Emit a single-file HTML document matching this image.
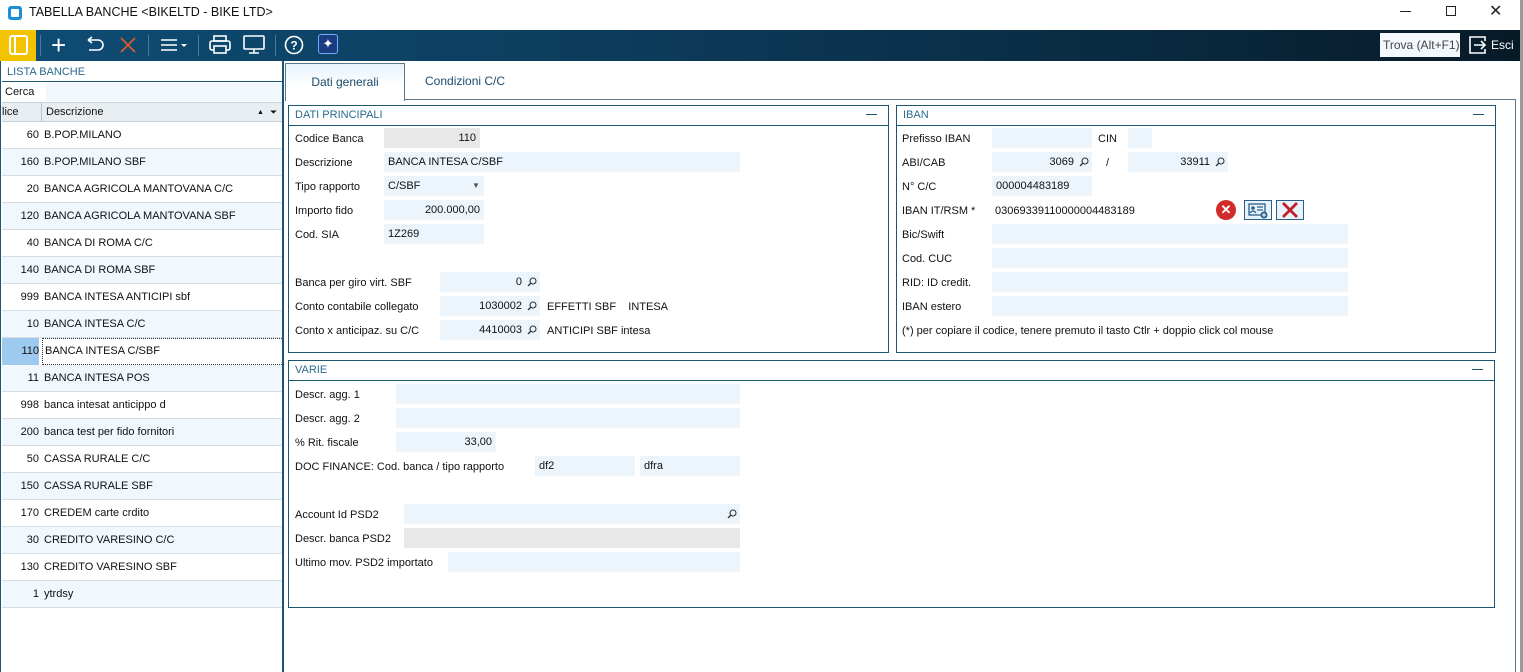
<!DOCTYPE html>
<html><head><meta charset="utf-8"><style>
*{margin:0;padding:0;box-sizing:border-box}
body{width:1523px;height:672px;overflow:hidden;background:#fff;font-family:"Liberation Sans",sans-serif;font-size:11px;color:#111;position:relative}
.a{position:absolute;white-space:nowrap}
.f{position:absolute;background:#edf5fc;height:20px;line-height:20px;padding:0 4px;white-space:nowrap}
.g{background:#e8e8e8}
.r{text-align:right}
.box{position:absolute;border:1px solid #1d5670}
.bh{height:20px;border-bottom:1px solid #1d5670;color:#2a6a8c;padding-left:6px;line-height:19px;position:relative}
.bh:after{content:"";position:absolute;right:11px;top:8px;width:11px;height:1px;background:#1d5670}
.row{position:absolute;left:2px;width:280px;height:27px;border-bottom:1px solid #d6dde4;line-height:26px}
.row .c{position:absolute;left:0;width:37px;text-align:right}
.row .d{position:absolute;left:42px}
.odd{background:#f0f7fd}
.mag{position:absolute;width:10px;height:10px}
</style></head><body>
<div class="a" style="left:8px;top:6px;width:14px;height:14px;background:#1c8fd6;border-radius:3px"><div style="position:absolute;left:3px;top:3px;width:8px;height:8px;background:#fff;border-radius:1px"></div></div>
<div class="a" style="left:29px;top:5px;font-size:12.5px">TABELLA BANCHE &lt;BIKELTD - BIKE LTD&gt;</div>
<div class="a" style="left:1400px;top:11px;width:11px;height:1px;background:#222"></div>
<div class="a" style="left:1446px;top:6px;width:10px;height:10px;border:1px solid #222"></div>
<div class="a" style="left:1489px;top:1px;font-size:16px;color:#222">✕</div>
<div class="a" style="left:1520px;top:0;width:3px;height:672px;background:#9a9a9a"></div>
<div class="a" style="left:0;top:30px;width:1520px;height:31px;background:linear-gradient(90deg,#0e4d75 0%,#0c3c5c 40%,#0a2a40 75%,#071a28 100%)"></div>
<div class="a" style="left:0;top:30px;width:36px;height:31px;background:#f3c200"></div>
<div class="a" style="left:9px;top:35px;width:19px;height:20px;border:2px solid #fff;border-radius:3px;background:#f3c200"><div style="position:absolute;left:3px;top:0;width:2px;height:16px;background:#fff"></div></div>
<div class="a" style="left:40px;top:35px;width:1px;height:21px;background:#4a7a9a"></div>
<div class="a" style="left:51px;top:30px;font-size:26px;color:#fff;line-height:30px;font-weight:300">+</div>
<svg class="a" style="left:84px;top:36px" width="22" height="18"><path d="M4 4h10a5 5 0 0 1 0 10H5M4 4l4-3M4 4l4 3" stroke="#fff" stroke-width="1.6" fill="none"/></svg>
<svg class="a" style="left:119px;top:36px" width="18" height="18"><path d="M2 2L16 16M16 2L2 16" stroke="#d65a2a" stroke-width="1.8"/></svg>
<div class="a" style="left:148px;top:35px;width:1px;height:21px;background:#4a7a9a"></div>
<svg class="a" style="left:160px;top:37px" width="28" height="16"><path d="M1 3h16M1 8h16M1 13h16" stroke="#fff" stroke-width="1.6"/><path d="M21 7l3 3 3-3z" fill="#fff"/></svg>
<div class="a" style="left:198px;top:35px;width:1px;height:21px;background:#4a7a9a"></div>
<svg class="a" style="left:209px;top:35px" width="22" height="20"><rect x="5" y="1" width="12" height="5" fill="none" stroke="#fff" stroke-width="1.6"/><rect x="1" y="6" width="20" height="9" rx="2" fill="none" stroke="#fff" stroke-width="1.6"/><rect x="5" y="11" width="12" height="7" fill="#0d4668" stroke="#fff" stroke-width="1.6"/></svg>
<svg class="a" style="left:243px;top:35px" width="22" height="20"><rect x="1" y="1" width="20" height="13" rx="1" fill="none" stroke="#fff" stroke-width="1.6"/><path d="M11 14v4M6 18h10" stroke="#fff" stroke-width="1.6"/></svg>
<div class="a" style="left:275px;top:35px;width:1px;height:21px;background:#4a7a9a"></div>
<svg class="a" style="left:284px;top:35px" width="22" height="22"><circle cx="10" cy="10" r="8.5" fill="none" stroke="#fff" stroke-width="1.6"/><text x="10" y="14.5" text-anchor="middle" fill="#fff" font-size="12" font-family="Liberation Sans" font-weight="bold">?</text></svg>
<div class="a" style="left:318px;top:34px;width:20px;height:20px;background:#1a3c80;border:1px solid #6ab0ff;border-radius:3px;color:#fff;font-size:13px;line-height:18px;text-align:center">✦</div>
<div class="a" style="left:1380px;top:33px;width:80px;height:24px;background:#f2f8fd;color:#444;font-size:12px;line-height:24px;padding-left:3px">Trova (Alt+F1)</div>
<svg class="a" style="left:1468px;top:35px" width="20" height="20"><path d="M8 2H2v16h6" stroke="#fff" stroke-width="1.6" fill="none"/><path d="M6 10h11M13 6l4 4-4 4" stroke="#fff" stroke-width="1.6" fill="none"/><path d="M8 2h9v4M17 14v4H8" stroke="#fff" stroke-width="1.6" fill="none"/></svg>
<div class="a" style="left:1491px;top:38px;color:#fff;font-size:12px">Esci</div>
<div class="a" style="left:0;top:61px;width:1px;height:611px;background:#1d5670"></div>
<div class="a" style="left:282px;top:61px;width:2px;height:611px;background:#1d5670"></div>
<div class="a" style="left:2px;top:63px;width:280px;height:19px;border-bottom:1px solid #1d5670;color:#2a6a8c;padding-left:5px;line-height:18px">LISTA BANCHE</div>
<div class="a" style="left:2px;top:83px;width:44px;height:18px;line-height:18px;padding-left:3px">Cerca</div>
<div class="a" style="left:46px;top:83px;width:236px;height:18px;background:#f0f7fd"></div>
<div class="a" style="left:2px;top:102px;width:280px;height:20px;background:#e9eef2;border-top:1px solid #c8d0d8;border-bottom:1px solid #c8d0d8;line-height:19px"><span class="a" style="left:0">lice</span><span class="a" style="left:39px;top:0;width:1px;height:19px;background:#b8c2cc"></span><span class="a" style="left:44px">Descrizione</span><span class="a" style="left:255px;font-size:7px">▲</span><span class="a" style="left:268px;font-size:9px">⏷</span></div>
<div class="row" style="top:122px"><span class="c">60</span><span class="d">B.POP.MILANO</span></div>
<div class="row odd" style="top:149px"><span class="c">160</span><span class="d">B.POP.MILANO SBF</span></div>
<div class="row" style="top:176px"><span class="c">20</span><span class="d">BANCA AGRICOLA MANTOVANA C/C</span></div>
<div class="row odd" style="top:203px"><span class="c">120</span><span class="d">BANCA AGRICOLA MANTOVANA SBF</span></div>
<div class="row" style="top:230px"><span class="c">40</span><span class="d">BANCA DI ROMA C/C</span></div>
<div class="row odd" style="top:257px"><span class="c">140</span><span class="d">BANCA DI ROMA SBF</span></div>
<div class="row" style="top:284px"><span class="c">999</span><span class="d">BANCA INTESA ANTICIPI sbf</span></div>
<div class="row odd" style="top:311px"><span class="c">10</span><span class="d">BANCA INTESA C/C</span></div>
<div class="row" style="top:338px;border:none"><span class="c" style="background:#9fcaf0;height:27px">110</span><span class="d" style="left:40px;width:240px;height:27px;border-top:1px dotted #333;border-bottom:1px dotted #333;border-left:1px dotted #333;padding-left:2px;line-height:25px">BANCA INTESA C/SBF</span></div>
<div class="row odd" style="top:365px"><span class="c">11</span><span class="d">BANCA INTESA POS</span></div>
<div class="row" style="top:392px"><span class="c">998</span><span class="d">banca intesat anticippo d</span></div>
<div class="row odd" style="top:419px"><span class="c">200</span><span class="d">banca test per fido fornitori</span></div>
<div class="row" style="top:446px"><span class="c">50</span><span class="d">CASSA RURALE C/C</span></div>
<div class="row odd" style="top:473px"><span class="c">150</span><span class="d">CASSA RURALE SBF</span></div>
<div class="row" style="top:500px"><span class="c">170</span><span class="d">CREDEM carte crdito</span></div>
<div class="row odd" style="top:527px"><span class="c">30</span><span class="d">CREDITO VARESINO C/C</span></div>
<div class="row" style="top:554px"><span class="c">130</span><span class="d">CREDITO VARESINO SBF</span></div>
<div class="row odd" style="top:581px"><span class="c">1</span><span class="d">ytrdsy</span></div>
<div class="a" style="left:404px;top:99px;width:1112px;height:1px;background:#5a7a90"></div>
<div class="a" style="left:1515px;top:99px;width:1px;height:573px;background:#5a7a90"></div>
<div class="a" style="left:285px;top:63px;width:120px;height:38px;border:1px solid #5a7a90;border-bottom:none;background:linear-gradient(#e6f3fc,#fff 60%);text-align:center;line-height:36px;font-size:12px;color:#1d4a6a">Dati generali</div>
<div class="a" style="left:425px;top:74px;font-size:12px;color:#1d4a6a">Condizioni C/C</div>
<div class="box" style="left:288px;top:105px;width:601px;height:248px"><div class="bh">DATI PRINCIPALI</div></div>
<div class="a" style="left:295px;top:133px">Codice Banca</div><div class="f g r" style="left:384px;top:128px;width:96px">110</div>
<div class="a" style="left:295px;top:157px">Descrizione</div><div class="f" style="left:384px;top:152px;width:356px">BANCA INTESA C/SBF</div>
<div class="a" style="left:295px;top:181px">Tipo rapporto</div><div class="f" style="left:384px;top:176px;width:100px">C/SBF<span class="a" style="left:88px;top:0;font-size:8px;color:#555">▼</span></div>
<div class="a" style="left:295px;top:205px">Importo fido</div><div class="f r" style="left:384px;top:200px;width:100px">200.000,00</div>
<div class="a" style="left:295px;top:229px">Cod. SIA</div><div class="f" style="left:384px;top:224px;width:100px">1Z269</div>
<div class="a" style="left:295px;top:277px">Banca per giro virt. SBF</div><div class="f r" style="left:440px;top:272px;width:100px;padding-right:18px">0</div>
<div class="a" style="left:295px;top:301px">Conto contabile collegato</div><div class="f r" style="left:440px;top:296px;width:100px;padding-right:18px">1030002</div><div class="a" style="left:547px;top:301px">EFFETTI SBF &nbsp;&nbsp;&nbsp;INTESA</div>
<div class="a" style="left:295px;top:325px">Conto x anticipaz. su C/C</div><div class="f r" style="left:440px;top:320px;width:100px;padding-right:18px">4410003</div><div class="a" style="left:547px;top:325px">ANTICIPI SBF intesa</div>
<div class="box" style="left:896px;top:105px;width:600px;height:248px"><div class="bh">IBAN</div></div>
<div class="a" style="left:902px;top:133px">Prefisso IBAN</div><div class="f" style="left:992px;top:128px;width:100px"></div><div class="a" style="left:1098px;top:133px">CIN</div><div class="f" style="left:1128px;top:128px;width:24px"></div>
<div class="a" style="left:902px;top:157px">ABI/CAB</div><div class="f r" style="left:992px;top:152px;width:100px;padding-right:18px">3069</div><div class="a" style="left:1106px;top:157px">/</div><div class="f r" style="left:1128px;top:152px;width:100px;padding-right:18px">33911</div>
<div class="a" style="left:902px;top:181px">N° C/C</div><div class="f" style="left:992px;top:176px;width:100px">000004483189</div>
<div class="a" style="left:902px;top:205px">IBAN IT/RSM *</div><div class="a" style="left:995px;top:205px">03069339110000004483189</div>
<div class="a" style="left:1216px;top:200px;width:20px;height:20px;border-radius:50%;background:#d12c2c;color:#fff;text-align:center;line-height:20px;font-size:13px;font-weight:bold">✕</div>
<svg class="a" style="left:1244px;top:200px" width="28" height="20"><rect x="0.5" y="0.5" width="27" height="19" fill="#e8f2fa" stroke="#2a5f88"/><rect x="5" y="4" width="16" height="11" fill="none" stroke="#2a5f88" stroke-width="1.3"/><circle cx="9" cy="8" r="1.8" fill="#2a5f88"/><path d="M6 13q3-4 6 0M13 7h6M13 10h6" stroke="#2a5f88" stroke-width="1.2" fill="none"/><circle cx="20" cy="15" r="3.5" fill="#2a5f88"/><path d="M18 15h4M20 13v4" stroke="#fff"/></svg>
<svg class="a" style="left:1276px;top:200px" width="28" height="20"><rect x="0.5" y="0.5" width="27" height="19" fill="#e8f2fa" stroke="#2a5f88"/><path d="M7 3L21 17M21 3L7 17" stroke="#c0202a" stroke-width="2.8"/></svg>
<div class="a" style="left:902px;top:229px">Bic/Swift</div><div class="f" style="left:992px;top:224px;width:356px"></div>
<div class="a" style="left:902px;top:253px">Cod. CUC</div><div class="f" style="left:992px;top:248px;width:356px"></div>
<div class="a" style="left:902px;top:277px">RID: ID credit.</div><div class="f" style="left:992px;top:272px;width:356px"></div>
<div class="a" style="left:902px;top:301px">IBAN estero</div><div class="f" style="left:992px;top:296px;width:356px"></div>
<div class="a" style="left:902px;top:325px">(*) per copiare il codice, tenere premuto il tasto Ctlr + doppio click col mouse</div>
<div class="box" style="left:288px;top:360px;width:1207px;height:248px"><div class="bh">VARIE</div></div>
<div class="a" style="left:295px;top:389px">Descr. agg. 1</div><div class="f" style="left:396px;top:384px;width:344px"></div>
<div class="a" style="left:295px;top:413px">Descr. agg. 2</div><div class="f" style="left:396px;top:408px;width:344px"></div>
<div class="a" style="left:295px;top:437px">% Rit. fiscale</div><div class="f r" style="left:396px;top:432px;width:100px">33,00</div>
<div class="a" style="left:295px;top:461px">DOC FINANCE: Cod. banca / tipo rapporto</div><div class="f" style="left:535px;top:456px;width:100px">df2</div><div class="f" style="left:640px;top:456px;width:100px">dfra</div>
<div class="a" style="left:295px;top:509px">Account Id PSD2</div><div class="f" style="left:404px;top:504px;width:336px"></div>
<div class="a" style="left:295px;top:533px">Descr. banca PSD2</div><div class="f g" style="left:404px;top:528px;width:336px"></div>
<div class="a" style="left:295px;top:557px">Ultimo mov. PSD2 importato</div><div class="f" style="left:448px;top:552px;width:292px"></div>
<svg class="mag a" style="left:527px;top:277px" viewBox="0 0 10 10"><circle cx="6" cy="4" r="3" fill="none" stroke="#333" stroke-width="1.1"/><path d="M4 6L1 9" stroke="#333" stroke-width="1.3"/></svg>
<svg class="mag a" style="left:527px;top:301px" viewBox="0 0 10 10"><circle cx="6" cy="4" r="3" fill="none" stroke="#333" stroke-width="1.1"/><path d="M4 6L1 9" stroke="#333" stroke-width="1.3"/></svg>
<svg class="mag a" style="left:527px;top:325px" viewBox="0 0 10 10"><circle cx="6" cy="4" r="3" fill="none" stroke="#333" stroke-width="1.1"/><path d="M4 6L1 9" stroke="#333" stroke-width="1.3"/></svg>
<svg class="mag a" style="left:1079px;top:157px" viewBox="0 0 10 10"><circle cx="6" cy="4" r="3" fill="none" stroke="#333" stroke-width="1.1"/><path d="M4 6L1 9" stroke="#333" stroke-width="1.3"/></svg>
<svg class="mag a" style="left:1215px;top:157px" viewBox="0 0 10 10"><circle cx="6" cy="4" r="3" fill="none" stroke="#333" stroke-width="1.1"/><path d="M4 6L1 9" stroke="#333" stroke-width="1.3"/></svg>
<svg class="mag a" style="left:727px;top:509px" viewBox="0 0 10 10"><circle cx="6" cy="4" r="3" fill="none" stroke="#333" stroke-width="1.1"/><path d="M4 6L1 9" stroke="#333" stroke-width="1.3"/></svg>
</body></html>
